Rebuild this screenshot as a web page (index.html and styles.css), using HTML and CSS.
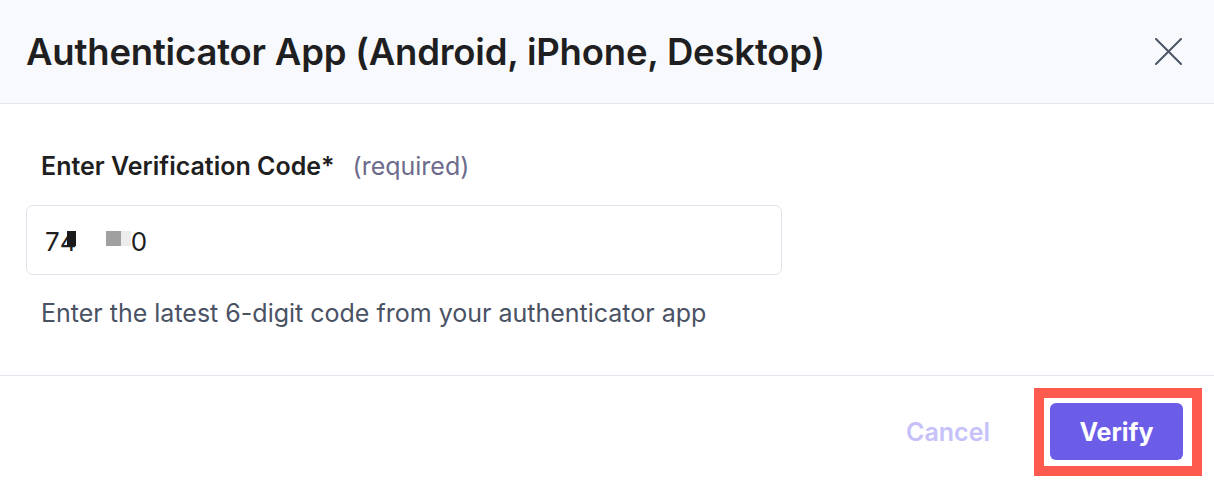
FILE: index.html
```html
<!DOCTYPE html>
<html>
<head>
<meta charset="utf-8">
<link rel="stylesheet" href="styles.css">
</head>
<body>
<div class="modal">
  <header class="modal-header">
    <h1 class="title">Authenticator App (Android, iPhone, Desktop)</h1>
    <button class="close" aria-label="Close">
      <svg width="27" height="27" viewBox="0 0 27 27"><path d="M1 1L26 26M26 1L1 26" stroke="#4b5563" stroke-width="2" stroke-linecap="round"/></svg>
    </button>
  </header>
  <section class="modal-body">
    <div class="label-row">
      <span class="label">Enter Verification Code*</span>
      <span class="req">(required)</span>
    </div>
    <div class="input">
      <span class="code">7<span class="masked">4<span class="blk"></span></span><span class="gap"></span><span class="gray"></span><span class="light"></span>0</span>
    </div>
    <p class="hint">Enter the latest 6-digit code from your authenticator app</p>
  </section>
  <footer class="modal-footer">
    <button class="cancel">Cancel</button>
    <div class="highlight">
      <button class="verify">Verify</button>
    </div>
  </footer>
</div>
</body>
</html>
```
FILE: styles.css
```css
* { box-sizing: border-box; }
html, body { margin: 0; padding: 0; background: #fff; }
body { font-family: Inter, "Noto Sans", sans-serif; color: #1f1f22; }
.modal { width: 1214px; height: 484px; display: flex; flex-direction: column; }
.modal-header {
  height: 104px;
  background: #f8f9fd;
  border-bottom: 1px solid #e4e6f0;
  display: flex;
  align-items: center;
  justify-content: space-between;
  padding: 0 32px 0 26px;
}
.title { margin: 0; font-size: 36.5px; line-height: 44px; font-weight: 600; letter-spacing: -0.2px; color: #1f1f22; padding-top: 1px; }
.close { border: 0; background: none; padding: 0; width: 27px; height: 27px; cursor: pointer; display: flex; }
.modal-body { padding: 47px 26px 0 26px; height: 272px; border-bottom: 1px solid #e2e6ef; }
.label-row { display: flex; align-items: baseline; gap: 18px; padding-left: 15px; line-height: 30px; }
.label { font-size: 25px; font-weight: 600; color: #1f1f22; }
.req { font-size: 25px; font-weight: 400; color: #6d6b8c; }
.input {
  margin-top: 24px;
  width: 756px;
  height: 70px;
  border: 1px solid #e0e3ec;
  border-radius: 7px;
  display: flex;
  align-items: center;
  padding-left: 18px;
}
.code { font-size: 26px; color: #1f1f22; display: flex; align-items: center; padding-top: 2px; }
.masked { position: relative; display: inline-block; width: 16px; overflow: hidden; }
.blk { position: absolute; left: 7px; top: 5px; width: 9px; height: 15px; background: #1a1a1a; }
.gap { display: inline-block; width: 30px; }
.gray { display: inline-block; width: 15px; height: 15px; background: #a0a0a0; margin-top: -6px; }
.light { display: inline-block; width: 10px; height: 15px; background: #ececec; margin-top: -6px; }
.hint { margin: 23px 0 0 15px; font-size: 25px; line-height: 30px; color: #4a5264; }
.modal-footer { flex: 1; display: flex; align-items: center; justify-content: flex-end; padding-right: 12px; padding-top: 4px; }
.cancel { border: 0; background: none; font-family: inherit; font-size: 25px; font-weight: 600; color: #c6c1f8; padding: 0; margin-right: 44px; }
.highlight { border: 10px solid #ff5a4e; padding: 5px 8px 6px 6px; width: 168px; height: 88px; }
.verify {
  width: 133px; height: 57px;
  border: 0; border-radius: 6px;
  background: #6b5de7;
  color: #fff;
  font-family: inherit;
  font-size: 25px;
  font-weight: 700;
}
```
